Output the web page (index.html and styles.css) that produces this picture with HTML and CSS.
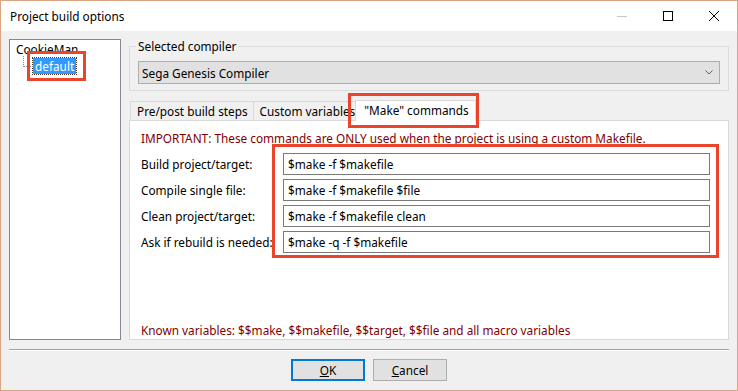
FILE: index.html
```html
<!DOCTYPE html>
<html lang="en">
  <head>
    <meta charset="UTF-8" />
    <title>Project build options</title>
    <link rel="stylesheet" href="styles.css">
  </head>
  <body>
    <!-- Dialog Window -->
    <div class="window">
      <!-- Title Bar -->
      <div class="titlebar">
        <span class="title">Project build options</span>
        <div class="controls">
          <span class="ctl">
            <svg width="10" height="10" viewBox="0 0 10 10"><path d="M0 5.5H10" stroke="#c6c6c6" stroke-width="1" /></svg>
          </span>
          <span class="ctl">
            <svg width="10" height="10" viewBox="0 0 10 10"><rect x="0.5" y="0.5" width="9" height="9" fill="none" stroke="#000" stroke-width="1" /></svg>
          </span>
          <span class="ctl">
            <svg width="10" height="10" viewBox="0 0 10 10"><path d="M0 0L10 10M10 0L0 10" stroke="#000" stroke-width="1" /></svg>
          </span>
        </div>
      </div>

      <!-- Targets Tree + Settings -->
      <div class="main">
        <ul class="tree">
          <li class="node">
            CookieMan
            <ul>
              <li class="node child"><span class="selected">default</span></li>
            </ul>
          </li>
        </ul>

        <div class="settings">
          <fieldset class="group">
            <legend>Selected compiler</legend>
            <div class="combo">
              <span>Sega Genesis Compiler</span>
              <svg width="8" height="5" viewBox="0 0 8 5"><path d="M0.5 0.5L4 4L7.5 0.5" fill="none" stroke="#606060" stroke-width="1" /></svg>
            </div>
          </fieldset>

          <div class="tabs">
            <span class="tab">Pre/post build steps</span>
            <span class="tab">Custom variables</span>
            <span class="tab active">"Make" commands</span>
          </div>

          <div class="panel">
            <p class="note">IMPORTANT: These commands are ONLY used when the project is using a custom Makefile.</p>
            <div class="cmds">
              <label>Build project/target:</label>
              <input type="text" value="$make -f $makefile" />
              <label>Compile single file:</label>
              <input type="text" value="$make -f $makefile $file" />
              <label>Clean project/target:</label>
              <input type="text" value="$make -f $makefile clean" />
              <label>Ask if rebuild is needed:</label>
              <input type="text" value="$make -q -f $makefile" />
            </div>
            <p class="note known">Known variables: $$make, $$makefile, $$target, $$file and all macro variables</p>
          </div>
        </div>
      </div>

      <div class="sep"></div>

      <!-- Dialog Buttons -->
      <div class="buttons">
        <button class="btn default"><u>O</u>K</button>
        <button class="btn"><u>C</u>ancel</button>
      </div>

      <!-- Red highlight marks -->
      <div class="mark mark-tree"></div>
      <div class="mark mark-tab"></div>
      <div class="mark mark-cmds"></div>
    </div>
  </body>
</html>
```

FILE: styles.css
```css
* {
  box-sizing: border-box;
}
body {
  margin: 0;
  font-family: "Noto Sans", "Open Sans", sans-serif;
  font-size: 11.8px;
  color: #000000;
}
.window {
  position: relative;
  width: 738px;
  height: 391px;
  border: 1px solid #dba584;
  background-color: #f0f0f0;
}
.titlebar {
  display: flex;
  align-items: center;
  height: 30px;
  padding-left: 9px;
  background-color: #ffffff;
}
.title {
  flex: 1;
  line-height: 16px;
}
.controls {
  display: flex;
  height: 100%;
}
.ctl {
  display: flex;
  align-items: center;
  justify-content: center;
  width: 46px;
}
.main {
  display: flex;
  column-gap: 8px;
  padding: 8px 8px 0;
}
.tree {
  width: 112px;
  height: 301px;
  margin: 0;
  padding: 1px 0 0 6px;
  list-style: none;
  background-color: #ffffff;
  border: 1px solid #828790;
}
.tree ul {
  margin: 0;
  padding: 0 0 0 17px;
  list-style: none;
}
.node {
  line-height: 16px;
}
.node.child {
  position: relative;
  padding-top: 1px;
}
.node.child::before {
  content: "";
  position: absolute;
  left: -10px;
  top: -1px;
  width: 9px;
  height: 10px;
  border-left: 1px dotted #8a8a8a;
  border-bottom: 1px dotted #8a8a8a;
}
.selected {
  display: inline-block;
  padding: 0 2px;
  line-height: 16px;
  color: #ffffff;
  background-color: #3399ff;
  outline: 1px dotted #4a3a20;
}
.settings {
  width: 600px;
}
.group {
  margin: 0;
  padding: 8px 8px 6px;
  min-width: 0;
  border: 1px solid #dcdcdc;
}
.group legend {
  margin-left: -2px;
  padding: 0 2px;
  line-height: 14px;
}
.combo {
  display: flex;
  align-items: center;
  justify-content: space-between;
  height: 23px;
  padding: 0 6px 0 3px;
  background-color: #e1e1e1;
  border: 1px solid #adadad;
}
.tabs {
  display: flex;
  align-items: flex-end;
  height: 20px;
  margin-top: 9px;
  padding-left: 1px;
}
.tab {
  height: 19px;
  padding: 0 5px 0 6px;
  line-height: 18px;
  border: 1px solid #d9d9d9;
  border-bottom: none;
  background-color: #f0f0f0;
  white-space: nowrap;
}
.tab + .tab {
  border-left: none;
}
.tab.active {
  position: relative;
  z-index: 1;
  height: 21px;
  margin: 0 0 -1px -6px;
  padding: 0 6px 0 8px;
  line-height: 19px;
  border-left: 1px solid #d9d9d9;
  background-color: #ffffff;
}
.panel {
  display: flex;
  flex-direction: column;
  height: 220px;
  padding: 9px 0 1px 11px;
  background-color: #ffffff;
  border: 1px solid #d9d9d9;
}
.note {
  margin: 0;
  line-height: 16px;
  color: #800000;
  white-space: nowrap;
}
.note.known {
  margin-top: auto;
}
.cmds {
  display: grid;
  grid-template-columns: 142px 427px;
  grid-auto-rows: 22px;
  row-gap: 4px;
  align-items: center;
  margin-top: 7px;
}
.cmds label {
  white-space: nowrap;
}
.cmds input {
  height: 22px;
  margin: 0;
  padding: 0 4px;
  font: inherit;
  color: #000000;
  background-color: #ffffff;
  border: 1px solid #7a7a7a;
  outline: none;
}
.sep {
  height: 2px;
  margin: 9px 8px 0;
  border-top: 1px solid #a0a0a0;
  border-bottom: 1px solid #ffffff;
}
.buttons {
  display: flex;
  justify-content: center;
  column-gap: 8px;
  margin-top: 8px;
}
.btn {
  width: 74px;
  height: 22px;
  padding: 0;
  font: inherit;
  color: #000000;
  background-color: #e1e1e1;
  border: 1px solid #adadad;
}
.btn.default {
  border-color: #0078d7;
  box-shadow: inset 0 0 0 1px #0078d7;
}
.mark {
  position: absolute;
  border: 3px solid #e8452c;
}
.mark-tree {
  left: 26px;
  top: 50px;
  width: 59px;
  height: 30px;
}
.mark-tab {
  left: 347px;
  top: 92px;
  width: 131px;
  height: 35px;
}
.mark-cmds {
  left: 271px;
  top: 143px;
  width: 447px;
  height: 114px;
}
```
